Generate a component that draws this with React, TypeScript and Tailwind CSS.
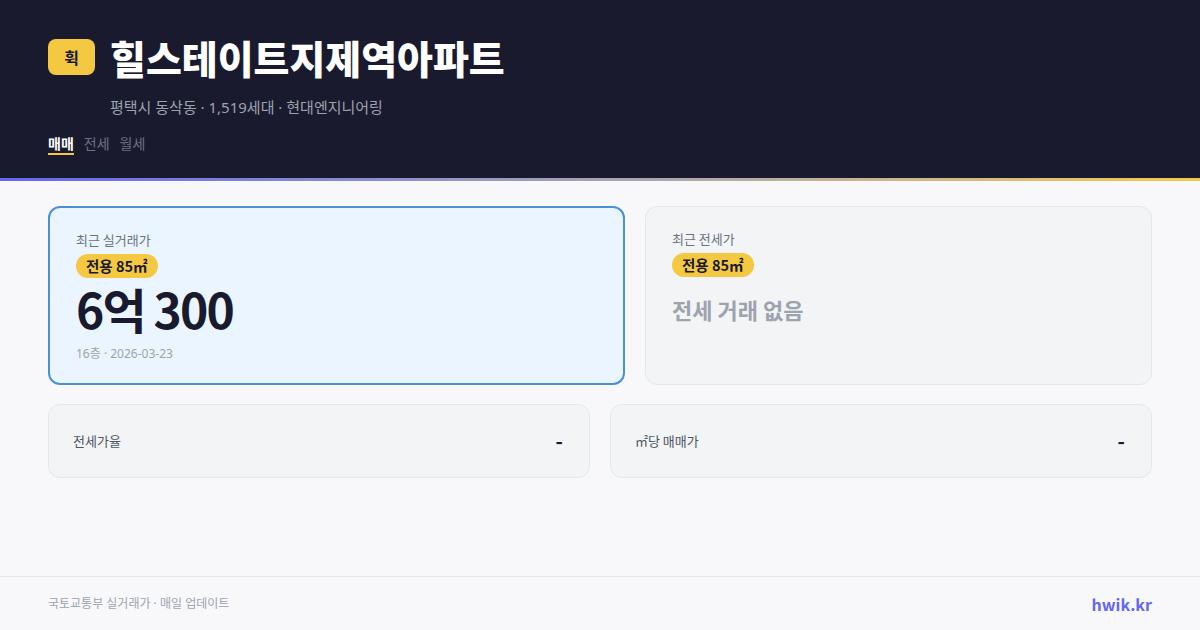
import React from 'react'

const font = { fontFamily: '"Noto Sans CJK KR", "Noto Sans", sans-serif' }
const latinFirst = { fontFamily: '"Noto Sans", "Noto Sans CJK KR", sans-serif' }

function AreaBadge() {
    return (
        <span className="inline-flex h-6 items-center rounded-full bg-[#f5c842] px-[10px] text-[14.5px] font-bold leading-6 text-[#1a1a2e]">
            전용 85㎡
        </span>
    )
}

function StatCard({ label, value }: { label: string, value: string }) {
    return (
        <div className="flex h-[74px] flex-1 items-center justify-between rounded-xl border border-[#e5e7eb] bg-[#f3f4f6] pl-6 pr-[26px]">
            <span className="text-[13px] text-[#4b5563]">{label}</span>
            <span className="text-xl font-bold text-[#1a1a2e]">{value}</span>
        </div>
    )
}

export default function App() {
    return (
        <div className="flex h-[630px] w-[1200px] flex-col overflow-hidden bg-[#f8f8fa]" style={font}>
            <header className="bg-[#1a1a2e] px-12 pb-[23px] pt-[36px]">
                <div className="flex h-[42px] items-center gap-[15px]">
                    <span className="flex h-9 w-[47px] items-center justify-center rounded-lg bg-[#f5c842] text-base font-bold text-[#1a1a2e]">
                        휙
                    </span>
                    <h1 className="text-[39px] font-black leading-none text-white">힐스테이트지제역아파트</h1>
                </div>
                <p className="ml-[62px] mt-[19px] text-[15px] leading-5 text-[#9ca3af]" style={latinFirst}>
                    평택시 동삭동 · 1,519세대 · 현대엔지니어링
                </p>
                <nav className="mt-4 flex gap-[10px] text-sm leading-5">
                    <span className="border-b-2 border-[#f5c842] font-bold text-white">매매</span>
                    <span className="border-b-2 border-transparent text-[#6b7280]">전세</span>
                    <span className="border-b-2 border-transparent text-[#6b7280]">월세</span>
                </nav>
            </header>
            <div className="h-[3px] bg-gradient-to-r from-[#6366f1] to-[#f5c842]"></div>

            <main className="flex flex-1 flex-col gap-[19px] px-12 pt-[25px]">
                <div className="flex gap-5">
                    <div className="h-[179px] w-[577px] rounded-xl border-2 border-[#4a90d9] bg-[#ebf5ff] px-[26px] pt-[22px]">
                        <div className="text-[13px] leading-5 text-[#6b7280]">최근 실거래가</div>
                        <div className="mt-1 flex">
                            <AreaBadge />
                        </div>
                        <div className="mt-1 text-[48px] font-bold leading-[52px] tracking-[-0.04em] text-[#1a1a2e]">6억 300</div>
                        <div className="mt-3 text-xs leading-4 text-[#9ca3af]" style={latinFirst}>16층 · 2026-03-23</div>
                    </div>
                    <div className="h-[179px] flex-1 rounded-xl border border-[#e5e7eb] bg-[#f3f4f6] px-[26px] pt-[22px]">
                        <div className="text-[13px] leading-5 text-[#6b7280]">최근 전세가</div>
                        <div className="mt-1 flex">
                            <AreaBadge />
                        </div>
                        <div className="mt-[16px] text-[22px] font-bold leading-8 text-[#9ca3af]">전세 거래 없음</div>
                    </div>
                </div>
                <div className="flex gap-5">
                    <StatCard label="전세가율" value="-" />
                    <StatCard label="㎡당 매매가" value="-" />
                </div>
            </main>

            <footer className="flex h-[54px] items-center justify-between border-t border-[#e5e7eb] px-12">
                <span className="text-xs text-[#9ca3af]" style={latinFirst}>국토교통부 실거래가 · 매일 업데이트</span>
                <span className="text-base font-bold text-[#6366f1]">hwik.kr</span>
            </footer>
        </div>
    )
}
